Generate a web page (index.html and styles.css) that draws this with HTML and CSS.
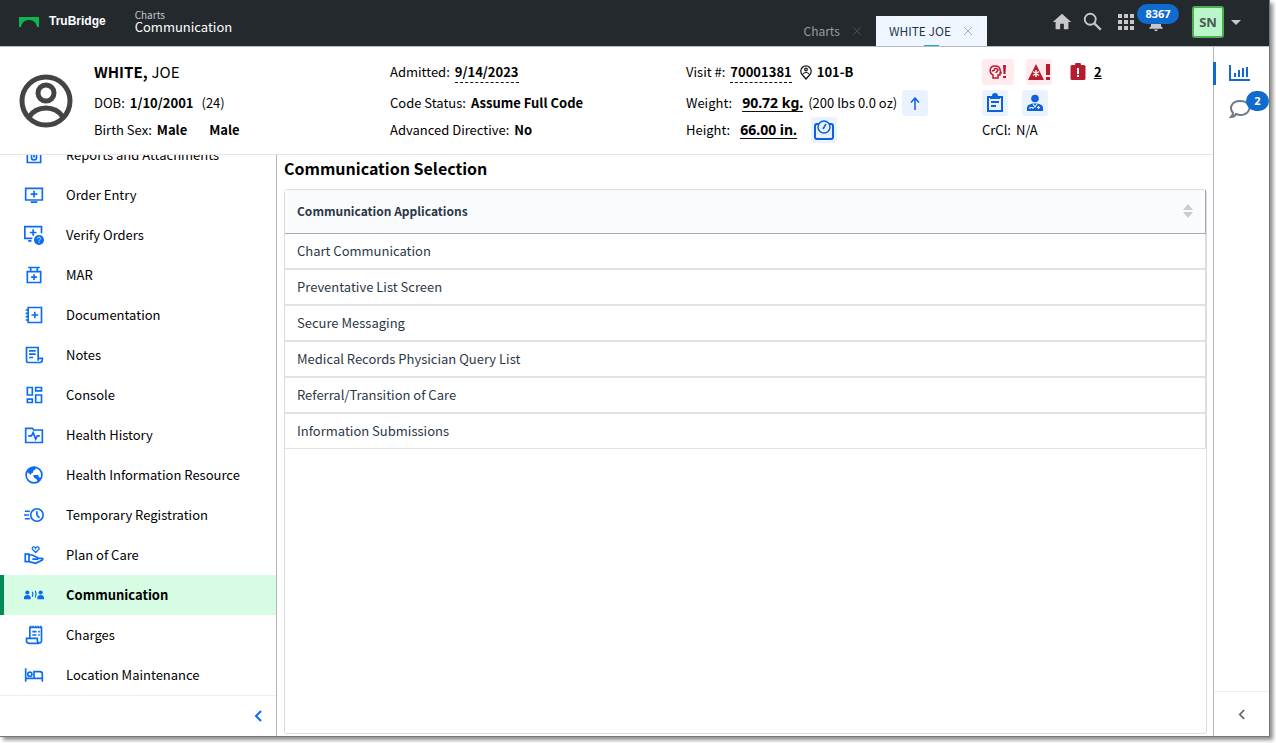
FILE: index.html
```html
<!DOCTYPE html>
<html lang="en">
<head>
  <meta charset="UTF-8">
  <meta name="viewport" content="width=device-width, initial-scale=1.0">
  <title>TruBridge - Communication</title>
  <link rel="stylesheet" href="styles.css">
</head>
<body>
<div class="app">

  <header class="topbar">
    <svg class="logo" viewBox="0 0 20 10" width="20" height="10"><path fill="#0bb84a" d="M0 0h20v10h-2C17 5 14 3 10 3S3 5 2 10H0z"/></svg>
    <span class="brand">TruBridge</span>
    <div class="crumbs">
      <span class="crumb-parent">Charts</span>
      <span class="crumb-page">Communication</span>
    </div>
    <nav class="tabs">
      <div class="tab"><a href="#">Charts</a><button type="button" aria-label="Close Charts"><svg viewBox="0 0 8 8" width="8" height="8"><path d="M0 0l8 8M8 0L0 8" stroke="currentColor"/></svg></button></div>
      <div class="tab active"><a href="#">WHITE JOE</a><button type="button" aria-label="Close WHITE JOE"><svg viewBox="0 0 8 8" width="8" height="8"><path d="M0 0l8 8M8 0L0 8" stroke="currentColor"/></svg></button></div>
    </nav>
    <div class="tools">
      <button type="button" class="tool" aria-label="Home"><svg viewBox="0 0 24 24" width="22" height="22"><path fill="currentColor" d="M10 20v-6h4v6h5v-8h3L12 3 2 12h3v8z"/></svg></button>
      <button type="button" class="tool search" aria-label="Search"><svg viewBox="0 0 24 24" width="22" height="22" fill="none" stroke="currentColor" stroke-width="2"><circle cx="9" cy="9" r="6"/><path d="M13.500 13.500l7 7" stroke-width="2.500"/></svg></button>
      <button type="button" class="tool apps" aria-label="Applications"><svg viewBox="0 0 16 16" width="16" height="16"><path fill="currentColor" d="M0 0h4v4H0zM6 0h4v4H6zM12 0h4v4h-4zM0 6h4v4H0zM6 6h4v4H6zM12 6h4v4h-4zM0 12h4v4H0zM6 12h4v4H6zM12 12h4v4h-4z"/></svg></button>
      <button type="button" class="tool bell" aria-label="Notifications"><svg viewBox="0 0 24 24" width="20" height="20"><path fill="currentColor" d="M12 23c1.100 0 2-.9 2-2h-4c0 1.100.9 2 2 2zm6-6v-6c0-3-1.600-5.600-4.500-6.300V4a1.500 1.500 0 0 0-3 0v.7C7.600 5.400 6 7.900 6 11v6l-2 2v1h16v-1z"/></svg><span class="badge">8367</span></button>
      <button type="button" class="user"><span class="initials">SN</span><svg viewBox="0 0 10 5" width="10" height="5"><path fill="currentColor" d="M0 0h10L5 5z"/></svg></button>
    </div>
  </header>

  <div class="workspace">
    <div class="chart">

      <section class="patient">
        <svg class="avatar" viewBox="0 0 54 54" width="54" height="54" fill="none" stroke="#444" stroke-width="5"><circle cx="27" cy="27" r="24"/><circle cx="27" cy="19" r="8"/><path d="M10 43c4-6 10-9 17-9s13 3 17 9"/></svg>
        <div class="facts">
          <p class="name"><b>WHITE,</b> JOE</p>
          <p>DOB: <b>1/10/2001</b> <span class="age">(24)</span></p>
          <p>Birth Sex: <b>Male</b> <b class="gender">Male</b></p>
        </div>
        <div class="facts">
          <p>Admitted: <a href="#" class="dashed">9/14/2023</a></p>
          <p>Code Status: <b>Assume Full Code</b></p>
          <p>Advanced Directive: <b>No</b></p>
        </div>
        <div class="facts">
          <p>Visit #: <a href="#" class="dashed">70001381</a>
            <svg class="pin" viewBox="0 0 12 15" width="12" height="15" fill="none" stroke="#111" stroke-width="1.200"><path d="M6 14L2.500 10A5.200 5.200 0 1 1 9.500 10z"/><circle cx="6" cy="4.500" r="1.300"/><path d="M3 9c1.500-2 4.500-2 6 0"/></svg>
            <b>101-B</b></p>
          <p>Weight: <a href="#" class="measure">90.72 kg.</a> <span>(200 lbs 0.0 oz)</span>
            <button type="button" class="chip" aria-label="Weight trend"><svg viewBox="0 0 10 13" width="10" height="13" fill="none" stroke="currentColor" stroke-width="1.500"><path d="M5 13V1M1 5.500l4-4.500 4 4.500"/></svg></button></p>
          <p>Height: <a href="#" class="measure">66.00 in.</a>
            <button type="button" class="chip scale" aria-label="Measurements"><svg viewBox="0 0 20 20" width="20" height="20" fill="none" stroke="currentColor" stroke-width="2"><path d="M5 4H3a2 2 0 0 0-2 2v11a2 2 0 0 0 2 2h14a2 2 0 0 0 2-2V6a2 2 0 0 0-2-2h-2"/><circle cx="10" cy="7" r="6" stroke-width="1.500"/><path d="M9 9l3-5" stroke-width="1.500"/></svg></button></p>
        </div>
        <div class="facts">
          <p>
            <button type="button" class="chip alert wide" aria-label="Fall risk"><svg viewBox="0 0 18 16" width="18" height="16"><path fill="none" stroke="currentColor" stroke-width="1.500" d="M4 14v-3C0 9 0 2 6 2c4 0 5 2 5 4l1 3h-1v2H9v3zM5 5c2-1 4 0 4 1S7 8 7 9M3 7l3-1"/><path fill="currentColor" d="M14 1h3l-.5 9h-2zM14 12h3v2h-3z"/></svg></button>
            <button type="button" class="chip alert" aria-label="Allergies"><svg viewBox="0 0 22 18" width="22" height="18"><path fill="currentColor" d="M8 1l8 16H0zM18 1h4v11h-4zM18 14h4v3h-4z"/><path stroke="#ffebee" stroke-width="1.500" d="M8 7v7M5 8.500l6 4M11 8.500l-6 4"/></svg></button>
            <a href="#" class="orders"><svg viewBox="0 0 16 18" width="16" height="18"><path fill="#b71c2e" d="M2 2h3a3 3 0 0 1 6 0h3a1.500 1.500 0 0 1 1.500 1.500v12A1.500 1.500 0 0 1 14 17H2a1.500 1.500 0 0 1-1.500-1.500v-12A1.500 1.500 0 0 1 2 2z"/><path fill="#fff" d="M7 5h2v6H7zM7 12h2v2H7z"/></svg><b>2</b></a>
          </p>
          <p>
            <button type="button" class="chip" aria-label="Care summary"><svg viewBox="0 0 18 20" width="18" height="20" fill="none" stroke="currentColor" stroke-width="2"><path d="M2 4h14v14H2zM5 9h8M5 13h5"/><path fill="currentColor" stroke="none" d="M4 3h2a3 3 0 0 1 6 0h2v3H4z"/></svg></button>
            <button type="button" class="chip provider" aria-label="Providers"><svg viewBox="0 0 16 18" width="16" height="18"><circle cx="8" cy="4.500" r="3.800" fill="currentColor"/><path fill="currentColor" d="M0 17v-3c0-3 3-4.500 8-4.500s8 1.500 8 4.500v3z"/><path fill="none" stroke="#e9f2fe" stroke-width="1.200" d="M6 10l2 3 2-3M3 15v-1.500h3V15M11.500 12v3M10 13.500h3"/></svg></button>
          </p>
          <p>CrCl: <span>N/A</span></p>
        </div>
      </section>

      <div class="content">
        <aside class="sidebar">
          <nav class="menu">
            <a href="#"><svg viewBox="0 0 24 24"><path d="M4 4h16v17H4zM9 10v5a3 3 0 0 0 6 0v-5M12 9v6"/></svg>Reports and Attachments</a>
            <a href="#"><svg viewBox="0 0 24 24"><path d="M2 4h20v14H2zM8 20.500h8M12 7v8M8 11h8"/></svg>Order Entry</a>
            <a href="#"><svg viewBox="0 0 24 24"><path d="M10 16H1V2h20v8M11 5v8M7 9h8M5 19h4"/><circle class="solid" cx="18" cy="18" r="6"/><path class="knock" d="M16 16.500c0-2.500 4-2.500 4 0 0 1-2 1-2 2.500M18 20v1.500"/></svg>Verify Orders</a>
            <a href="#"><svg viewBox="0 0 24 24"><path d="M5 3h14M8 3v5M16 3v5M4 8h16v13H4zM12 11v7M8.500 14.500h7"/></svg>MAR</a>
            <a href="#"><svg viewBox="0 0 24 24"><path d="M5 3h16v18H5zM13 8v8M9 12h8M2 6h4M2 10h4M2 14h4M2 18h4"/></svg>Documentation</a>
            <a href="#"><svg viewBox="0 0 24 24"><path d="M17 15V3H3v16c0 1 1 2 2 2h14a3 3 0 0 0 3-3v-2h-5v3M6 7h8M6 11h8M6 15h5"/></svg>Notes</a>
            <a href="#"><svg viewBox="0 0 24 24"><path d="M4 3h6v9H4zM14 3h7v4h-7zM14 12h7v9h-7zM4 17h6v4H4z"/></svg>Console</a>
            <a href="#"><svg viewBox="0 0 24 24"><path d="M2 4h8l2 2h10v15H2zM5 13h4l2-4 3 8 2-4h3"/></svg>Health History</a>
            <a href="#"><svg viewBox="0 0 24 24"><circle cx="12" cy="12" r="9.500"/><path class="solid" d="M3 8l3-4 5-2h3v3l-3 2v2L9 10l-1 2-2-2zM11 12h6l1 3h2l1 1-4 5-2-4-3-2z"/></svg>Health Information Resource</a>
            <a href="#"><svg viewBox="0 0 24 24"><circle cx="15.500" cy="12" r="7.500"/><path d="M15.500 7.500V12l3 3.500M1 7.500h6M0 12h6M1 16.500h6"/></svg>Temporary Registration</a>
            <a href="#"><svg viewBox="0 0 24 24"><path d="M1.500 11H6v9H1.500zM6 12h4l6 3v2h-6M16 16h5c2 0 2 1 1 2l-8 4-8-2"/><path d="M14 9L10 5c-1-3 3-4 4-1 1-3 5-2 4 1z" stroke-width="1.500"/></svg>Plan of Care</a>
            <a href="#" class="current"><svg viewBox="0 0 24 24"><path class="solid" d="M0 17v-2c0-2 2-3 4-3s4 1 4 3v2zM16 17v-2c0-2 2-3 4-3s4 1 4 3v2z"/><circle class="solid" cx="4" cy="9" r="2.500"/><circle class="solid" cx="20" cy="9" r="2.500"/><path d="M10 8c1 2 1 4 0 6M13.500 7c1.500 3 1.500 5 0 8" stroke-width="1.500"/></svg>Communication</a>
            <a href="#"><svg viewBox="0 0 24 24"><path d="M7 16V3h14v16a2.500 2.500 0 0 1-5 0v-3H3v3a3 3 0 0 0 3 3h12M10 8h5M10 12h5M17 8h2M17 12h2"/><path d="M7 2h14" stroke-dasharray="2 1"/></svg>Charges</a>
            <a href="#"><svg viewBox="0 0 24 24"><path d="M2 4v16M2 16h20M22 20v-9c0-2-1-3-3-3h-7v8"/><circle cx="7" cy="11" r="2.500"/></svg>Location Maintenance</a>
          </nav>
          <button type="button" class="collapse" aria-label="Collapse menu"><svg viewBox="0 0 8 12" width="8" height="12"><path d="M7 1L2 6l5 5" fill="none" stroke="currentColor" stroke-width="2"/></svg></button>
        </aside>

        <main class="page">
          <h1>Communication Selection</h1>
          <div class="panel">
            <table>
              <thead>
                <tr><th><div class="heading">Communication Applications <svg viewBox="0 0 10 14" width="10" height="14"><path fill="#c9ccd3" d="M5 0l5 6H0zM0 8h10l-5 6z"/></svg></div></th></tr>
              </thead>
              <tbody>
                <tr><td>Chart Communication</td></tr>
                <tr><td>Preventative List Screen</td></tr>
                <tr><td>Secure Messaging</td></tr>
                <tr><td>Medical Records Physician Query List</td></tr>
                <tr><td>Referral/Transition of Care</td></tr>
                <tr><td>Information Submissions</td></tr>
              </tbody>
            </table>
          </div>
        </main>
      </div>
    </div>

    <aside class="rail">
      <button type="button" class="rail-item selected" aria-label="Trends"><svg viewBox="0 0 22 18" width="22" height="18" fill="none" stroke="currentColor" stroke-width="2"><path d="M1 1v15h20M6 9v4M10 6v7M14 4v9M18 3v10"/></svg></button>
      <button type="button" class="rail-item" aria-label="Messages"><svg viewBox="0 0 22 20" width="22" height="20" fill="none" stroke="currentColor" stroke-width="2"><path d="M4 14C-1 8 4 2 11 2s11 4 9 9-8 6-13 4c-1 2-3 3-5 3 1-1 2-2 2-4z"/></svg><span class="badge">2</span></button>
      <button type="button" class="rail-collapse" aria-label="Expand panel"><svg viewBox="0 0 8 12" width="7" height="11"><path d="M7 1L2 6l5 5" fill="none" stroke="currentColor" stroke-width="2"/></svg></button>
    </aside>
  </div>

</div>
</body>
</html>
```

FILE: styles.css
```css
* {
  box-sizing: border-box;
}
body {
  margin: 0;
  height: 100vh;
  padding: 0 6px 6px 0;
  overflow: hidden;
  background: #fff;
  color: #000;
  font-family: "Noto Sans CJK SC", "Noto Sans", sans-serif;
  font-size: 13px;
  line-height: 20px;
}
button {
  padding: 0;
  border: 0;
  background: none;
  color: inherit;
  font: inherit;
  cursor: pointer;
}
a {
  color: inherit;
  text-decoration: none;
}
p, h1 {
  margin: 0;
}
svg {
  display: block;
  flex: none;
}
.app {
  height: 100%;
  display: flex;
  flex-direction: column;
  border-right: 1px solid #777;
  border-bottom: 1px solid #777;
  box-shadow: 3px 3px 4px rgba(0, 0, 0, 0.45);
}

/* top bar */
.topbar {
  display: flex;
  align-items: center;
  height: 47px;
  padding-left: 19px;
  background: #24292e;
  border-bottom: 1px solid #b9bcc0;
  color: #fff;
}
.brand {
  margin: 0 29px 0 10px;
  padding-bottom: 4px;
  font: bold 12px/18px "Liberation Sans", Arial, sans-serif;
}
.logo {
  margin-bottom: 3px;
}
.crumbs {
  display: flex;
  flex-direction: column;
  padding-bottom: 3px;
}
.crumb-parent {
  font-size: 10px;
  line-height: 10px;
  color: #c4c4c4;
}
.crumb-page {
  line-height: 14px;
}
.tabs {
  display: flex;
  align-self: flex-end;
  margin-left: auto;
}
.tab {
  position: relative;
  display: flex;
  align-items: center;
  gap: 13px;
  height: 30px;
  padding: 0 15px 0 13px;
  font-size: 12px;
  color: #9a9a9a;
}
.tab button {
  color: #4a4d51;
}
.tab.active {
  background: #eff6ff;
  color: #24364b;
}
.tab.active button {
  color: #a8adb3;
}
.tab.active::after {
  content: "";
  position: absolute;
  left: 48px;
  bottom: 0;
  width: 15px;
  height: 1px;
  background: #17a9d6;
}
.tools {
  display: flex;
  align-items: center;
  margin-left: 64px;
  padding: 0 28px 2px 0;
  color: #c8c8c8;
}
.search {
  margin-left: 9px;
}
.apps {
  margin-left: 14px;
}
.bell {
  position: relative;
  margin: 0 26px 0 12px;
}
.badge {
  position: absolute;
  border-radius: 10px;
  background: #116bce;
  color: #fff;
  font: bold 11px/20px "Open Sans", sans-serif;
  text-align: center;
}
.bell .badge {
  top: -8px;
  left: -9px;
  width: 42px;
}
.user {
  display: flex;
  align-items: center;
  gap: 7px;
}
.initials {
  width: 32px;
  border: 2px solid #4caf50;
  border-radius: 3px;
  background: #b9f6ca;
  color: #4a5a50;
  font: bold 13px/28px "Noto Sans", Verdana, sans-serif;
}

.workspace {
  display: flex;
  flex: 1;
  min-height: 0;
}
.chart {
  display: flex;
  flex: 1;
  flex-direction: column;
  min-width: 0;
}

/* patient banner */
.patient {
  display: grid;
  grid-template-columns: 94px 296fr 296fr 296fr 231fr;
  padding: 12px 0 11px;
  border-bottom: 1px solid #e6e6e6;
  white-space: nowrap;
}
.avatar {
  align-self: center;
  margin-left: 19px;
}
.facts {
  display: grid;
  grid-template-rows: 31px 27px 26px;
}
.facts p {
  display: flex;
  align-items: center;
  gap: 5px;
  height: 26px;
}
.facts .name {
  gap: 4px;
  font-size: 15px;
}
.facts b, .facts span {
  line-height: 20px;
}
.age {
  margin-left: 3px;
}
.gender {
  margin-left: 17px;
}
.dashed {
  border-bottom: 1px dashed #111;
  font-weight: bold;
}
.pin {
  margin-left: 3px;
}
.measure {
  margin-left: 5px;
  border-bottom: 1px solid #111;
  font: bold 14px/17px "Noto Sans", sans-serif;
}
.chip {
  display: flex;
  align-items: center;
  justify-content: center;
  width: 26px;
  height: 26px;
  border-radius: 3px;
  background: #e9f2fe;
  color: #0b62dc;
}
.scale {
  margin-left: 9px;
}
.alert {
  margin-right: 7px;
  background: #ffebee;
  color: #b71c2e;
}
.wide {
  width: 32px;
}
.provider {
  margin-left: 9px;
}
.orders {
  display: flex;
  align-items: center;
  gap: 8px;
  margin-left: 6px;
  text-decoration: underline;
}

.content {
  display: flex;
  flex: 1;
  min-height: 0;
}

/* side menu, scrolled to the end */
.sidebar {
  display: flex;
  flex-direction: column;
  width: 277px;
  border-right: 1px solid #b5b5b5;
}
.menu {
  display: flex;
  flex: 1;
  flex-direction: column;
  justify-content: flex-end;
  min-height: 0;
  overflow: hidden;
}
.menu a {
  display: flex;
  flex: none;
  align-items: center;
  gap: 22px;
  height: 40px;
  padding-left: 20px;
  border-left: 4px solid transparent;
}
.menu a.current {
  border-color: #028a57;
  background: #d6fde3;
  font-weight: bold;
}
.menu svg {
  width: 20px;
  height: 20px;
  fill: none;
  stroke: #0a6cf5;
  stroke-width: 2;
}
.menu .solid {
  fill: #0a6cf5;
  stroke: none;
}
.menu .knock {
  stroke: #fff;
  stroke-width: 1;
}
.collapse {
  display: flex;
  align-items: center;
  justify-content: flex-end;
  height: 41px;
  padding-right: 14px;
  border-top: 1px solid #eee;
  color: #0a6cf5;
}

/* main page */
.page {
  display: flex;
  flex: 1;
  flex-direction: column;
  min-width: 0;
  padding: 3px 6px 2px 7px;
}
h1 {
  margin-bottom: 11px;
  font-size: 16px;
  line-height: 20px;
}
.panel {
  flex: 1;
  border: 1px solid #d9dde3;
  border-radius: 3px;
}
table {
  width: 100%;
  border-collapse: separate;
  border-spacing: 0;
  color: #2b3848;
}
th {
  height: 44px;
  padding: 0 12px 2px;
  border-right: 1px solid #a6a9ad;
  border-bottom: 1px solid #a6a9ad;
  background: #fafbfd;
  font-size: 12px;
}
.heading {
  display: flex;
  align-items: center;
  justify-content: space-between;
}
td {
  height: 36px;
  padding: 0 12px;
  border-right: 1px solid #d9dde3;
  border-bottom: 2px solid #dfe2e6;
}
tr:last-child td {
  height: 35px;
  border-bottom-width: 1px;
}

/* right rail */
.rail {
  display: flex;
  flex-direction: column;
  width: 56px;
  padding-top: 8px;
  border-left: 1px solid #b5b5b5;
}
.rail-item {
  position: relative;
  display: flex;
  align-items: center;
  height: 36px;
  padding-left: 15px;
  color: #6d7986;
}
.rail-item.selected {
  color: #116bce;
}
.rail-item.selected::before {
  content: "";
  position: absolute;
  left: -1px;
  top: 7px;
  width: 3px;
  height: 23px;
  background: #116bce;
}
.rail-item .badge {
  top: 0;
  right: 0;
  width: 23px;
}
.rail-collapse {
  display: flex;
  align-items: center;
  justify-content: center;
  height: 45px;
  margin-top: auto;
  border-top: 1px solid #eee;
  color: #666;
}
```
